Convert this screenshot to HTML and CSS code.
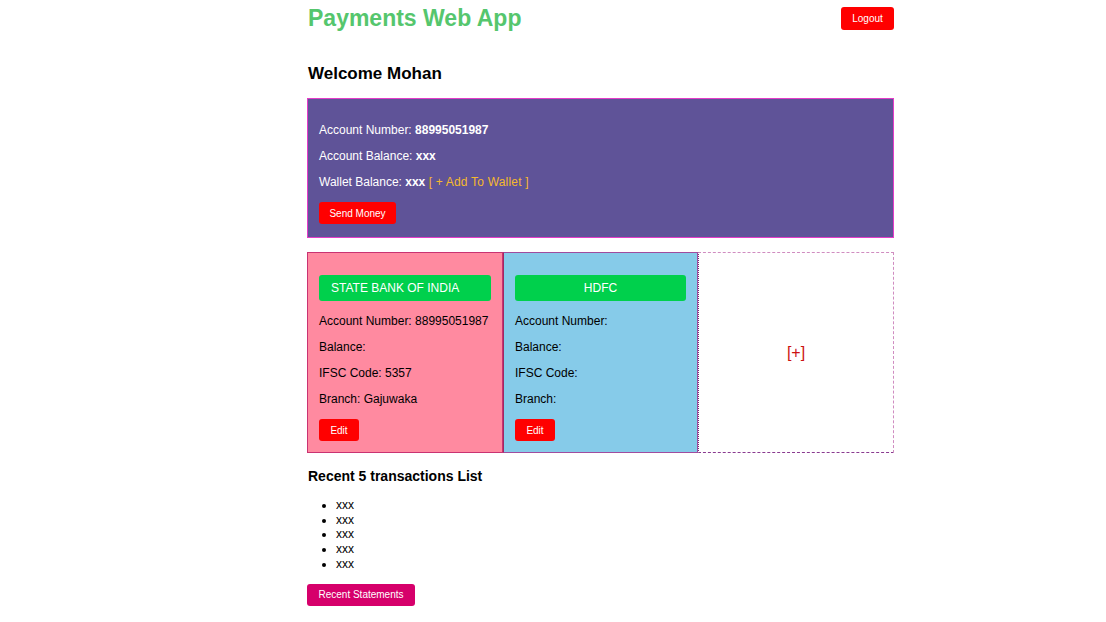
FILE: index.html
```html
<!DOCTYPE html>
<html>
<head>
<meta charset="utf-8">
<link rel="stylesheet" href="styles.css">
</head>
<body>
<div class="page">
  <header class="top">
    <h1 class="brand">Payments Web App</h1>
    <button class="btn btn-red logout">Logout</button>
  </header>
  <h2 class="welcome">Welcome Mohan</h2>
  <section class="summary">
    <p>Account Number: <b>88995051987</b></p>
    <p>Account Balance: <b>xxx</b></p>
    <p>Wallet Balance: <b>xxx</b> <span class="add">[ + Add To Wallet ]</span></p>
    <button class="btn btn-red send">Send Money</button>
  </section>
  <section class="banks">
    <div class="card card-pink">
      <div class="bank-name left">STATE BANK OF INDIA</div>
      <p>Account Number: 88995051987</p>
      <p>Balance:</p>
      <p>IFSC Code: 5357</p>
      <p>Branch: Gajuwaka</p>
      <button class="btn btn-red edit">Edit</button>
    </div>
    <div class="card card-blue">
      <div class="bank-name">HDFC</div>
      <p>Account Number:</p>
      <p>Balance:</p>
      <p>IFSC Code:</p>
      <p>Branch:</p>
      <button class="btn btn-red edit">Edit</button>
    </div>
    <div class="card card-add">
      <span class="plus">[+]</span>
    </div>
  </section>
  <h3 class="recent">Recent 5 transactions List</h3>
  <ul class="tx">
    <li>xxx</li>
    <li>xxx</li>
    <li>xxx</li>
    <li>xxx</li>
    <li>xxx</li>
  </ul>
  <button class="btn btn-pink statements">Recent Statements</button>
</div>
</body>
</html>
```
FILE: styles.css
```css
html, body {
  margin: 0;
  padding: 0;
  background: #fff;
}
body {
  font-family: "Liberation Sans", Arial, sans-serif;
  color: #000;
}
.page {
  width: 587px;
  margin-left: 307px;
  padding-top: 4px;
}
.top {
  display: flex;
  justify-content: space-between;
  align-items: flex-start;
  height: 58px;
}
.brand {
  margin: 0 0 0 1px;
  font-size: 23px;
  line-height: 28px;
  font-weight: bold;
  color: #55c66d;
}
.btn {
  border: none;
  border-radius: 3px;
  color: #fff;
  font-family: "Liberation Sans", Arial, sans-serif;
  font-size: 10px;
  cursor: pointer;
  padding: 0;
}
.btn-red { background: #ff0000; }
.btn-pink { background: #d6006b; }
.logout {
  margin-top: 3px;
  width: 53px;
  height: 23px;
}
.welcome {
  margin: 0 0 0 1px;
  font-size: 17px;
  line-height: 24px;
  font-weight: bold;
  height: 36px;
}
.summary {
  background: #5f5398;
  border: 1px solid #e43cc8;
  padding: 12px 11px 13px;
  color: #fff;
  font-size: 12px;
}
.summary p {
  margin: 12px 0;
  line-height: 14px;
}
.summary .add {
  color: #f5b82e;
  letter-spacing: 0.2px;
}
.send {
  width: 77px;
  height: 22px;
  display: block;
  margin-top: 13px;
}
.banks {
  margin-top: 14px;
  display: grid;
  grid-template-columns: 196px 195px 196px;
  height: 201px;
}
.card {
  padding: 22px 11px 11px;
  font-size: 12px;
}
.card p {
  margin: 12px 0;
  line-height: 14px;
}
.card .bank-name + p { margin-top: 13px; }
.card-pink {
  background: #ff8aa0;
  border: 1px solid #c93272;
}
.card-blue {
  background: #86cbe9;
  border: 1px solid #a04c9e;
  border-left: 1px solid #a02a60;
}
.card-add {
  border: 1px dashed #d08cc0;
  border-left: 1px dotted #70307a;
  border-bottom: 1px dashed #8a3a90;
  display: flex;
  align-items: center;
  justify-content: center;
  padding: 0;
}
.plus {
  color: #cc1111;
  font-size: 16px;
}
.bank-name {
  background: #00d04c;
  color: #fff;
  border-radius: 3px;
  height: 26px;
  line-height: 26px;
  text-align: center;
  font-size: 12px;
}
.bank-name.left {
  text-align: left;
  padding-left: 12px;
}
.edit {
  width: 40px;
  height: 22px;
  display: block;
  margin-top: 13px;
}
.recent {
  margin: 14px 0 0 1px;
  font-size: 14px;
  line-height: 18px;
  font-weight: bold;
}
.tx {
  margin: 13px 0 12px;
  padding-left: 29px;
  font-size: 12px;
  line-height: 14.7px;
}
.statements {
  width: 108px;
  height: 22px;
  display: block;
}
```
